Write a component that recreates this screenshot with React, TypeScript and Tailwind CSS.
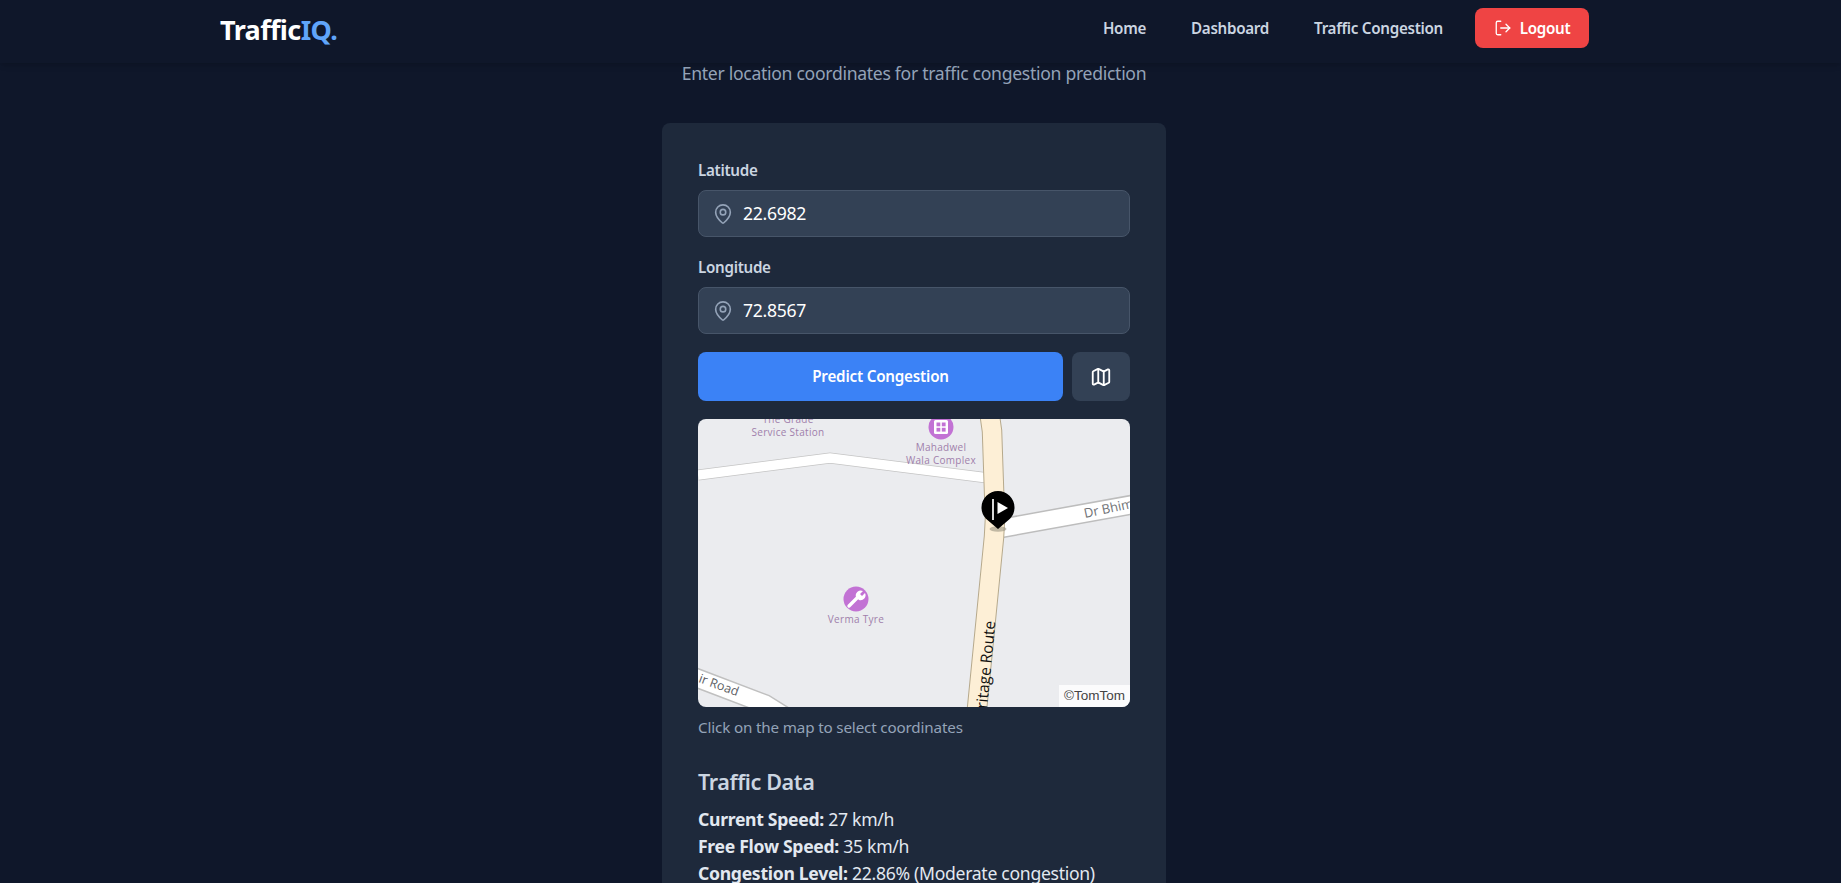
import { LogOut, MapPin, Map as MapIcon } from 'lucide-react';

const font = { fontFamily: '"Noto Sans", sans-serif' };
const mapFont = { fontFamily: '"Open Sans", sans-serif' };

function CoordinateField({ label, value }: { label: string; value: string }) {
  return (
    <div className="mb-[18px]">
      <label className="block h-[24px] mb-[8px] text-[15.2px] leading-[24px] font-semibold text-[#cbd5e1] tracking-[-0.3px]">{label}</label>
      <div className="flex items-center h-[47px] rounded-lg border border-[#475569] bg-[#334155] pl-[13px]">
        <MapPin size={22} strokeWidth={1.75} className="text-[#94a3b8] shrink-0" />
        <span className="ml-[9px] text-[17.6px] text-white tracking-[-0.3px]">{value}</span>
      </div>
    </div>
  );
}

// static drawing of the map tile
function MapTile() {
  const road = 'M292 -2 L294 12 L297 100 L296 118 L279 290';
  return (
    <svg viewBox="0 0 432 288" className="block w-full h-full">
      <rect width="432" height="288" fill="#ebecef" />
      <path d="M0 56 L132 39 L290 59" fill="none" stroke="#c4c4c4" strokeWidth="11" />
      <path d="M0 56 L132 39 L290 59" fill="none" stroke="#ffffff" strokeWidth="9.5" />
      <path d="M296 110.6 L436 85.3" fill="none" stroke="#bdbdbd" strokeWidth="20" />
      <path d="M296 110.6 L436 85.3" fill="none" stroke="#ffffff" strokeWidth="17" />
      <path d="M-4 258 L67 285 L112 313" fill="none" stroke="#c0c0c0" strokeWidth="20" />
      <path d="M-4 258 L67 285 L112 313" fill="none" stroke="#ffffff" strokeWidth="17" />
      <path d={road} fill="none" stroke="#b6a98c" strokeWidth="20.5" />
      <path d={road} fill="none" stroke="#fdefd6" strokeWidth="18.5" />

      <g fontSize="10" fill="#a07fab" textAnchor="middle" letterSpacing="0.3" style={mapFont}>
        <text x="90" y="4">The Grade</text>
        <text x="90" y="17">Service Station</text>
        <text x="243" y="32">Mahadwel</text>
        <text x="243" y="45">Wala Complex</text>
        <text x="158" y="204">Verma Tyre</text>
      </g>

      <circle cx="243" cy="8" r="12.5" fill="#c272d4" />
      <rect x="236" y="1" width="14" height="14" rx="1.5" fill="#ffffff" />
      <rect x="238.5" y="3.5" width="3.8" height="3.8" fill="#c272d4" />
      <rect x="243.8" y="3.5" width="3.8" height="3.8" fill="#c272d4" />
      <rect x="238.5" y="8.8" width="3.8" height="3.8" fill="#c272d4" />
      <rect x="243.8" y="8.8" width="3.8" height="3.8" fill="#c272d4" />

      <circle cx="158" cy="180" r="12.5" fill="#c272d4" />
      <path d="M151 187 L160 178" stroke="#ffffff" strokeWidth="3.4" strokeLinecap="round" />
      <path d="M158 178 a5 5 0 0 1 7 -6 l-3 3 l2 2 l3 -3 a5 5 0 0 1 -6 7 z" fill="#ffffff" />

      <text transform="translate(387 99) rotate(-12)" fontSize="13" fill="#6f7276" style={mapFont}>Dr Bhim</text>
      <text transform="translate(0 263) rotate(20)" fontSize="12.5" fill="#5d6064" style={mapFont}>ir Road</text>
      <text transform="translate(289 290) rotate(-84.5)" fontSize="15.5" fill="#111111" style={mapFont}>ritage Route</text>

      <ellipse cx="300" cy="110" rx="8.5" ry="2.8" fill="#8f8a7a" opacity="0.55" />
      <path d="M300 110 L288 99.8 A16.5 16.5 0 1 1 312 99.8 Z" fill="#000000" />
      <rect x="294" y="80" width="2" height="21" fill="#d8d8d8" />
      <path d="M299.5 83 L310 89 L299.5 95 Z" fill="#ffffff" />
    </svg>
  );
}

function DataLine({ label, value }: { label: string; value: string }) {
  return (
    <p className="h-[26.8px] text-[17.6px] leading-[26.8px] text-[#e2e8f0] tracking-[-0.3px] whitespace-nowrap">
      <strong className="font-bold">{label}</strong> {value}
    </p>
  );
}

export default function App() {
  return (
    <div className="h-screen overflow-hidden bg-[#0f172a]" style={font}>
      <header className="relative z-10 flex items-start justify-between h-[63px] pl-[220px] pr-[252px] bg-[#0f172a] shadow-md">
        <div className="mt-[11px] text-[27px] leading-[38px] font-bold text-white tracking-[-0.6px]">
          Traffic<span className="text-[#60a5fa]">IQ.</span>
        </div>
        <nav className="flex items-center mt-[8px] text-[15.2px] font-semibold text-[#cbd5e1] tracking-[-0.3px]">
          <a className="mr-[45px]">Home</a>
          <a className="mr-[45px]">Dashboard</a>
          <a className="mr-[32px]">Traffic Congestion</a>
          <button className="flex items-center gap-[8px] h-[40px] w-[114px] justify-center rounded-lg bg-[#ef4444] text-white">
            <LogOut size={18} strokeWidth={1.75} />
            Logout
          </button>
        </nav>
      </header>
      <main className="flex flex-col items-center pr-[13px]">
        <p className="text-[17.6px] leading-[20px] text-[#94a3b8] tracking-[-0.3px]">
          Enter location coordinates for traffic congestion prediction
        </p>
        <section className="w-[504px] mt-[40px] rounded-lg bg-[#1e293b] px-[36px] pt-[35px] pb-[36px]">
          <CoordinateField label="Latitude" value="22.6982" />
          <CoordinateField label="Longitude" value="72.8567" />
          <div className="flex gap-[9px] h-[49px]">
            <button className="flex-1 rounded-lg bg-[#3b82f6] text-[15.2px] font-semibold text-white tracking-[-0.2px]">Predict Congestion</button>
            <button className="flex items-center justify-center w-[58px] rounded-lg bg-[#334155] text-white">
              <MapIcon size={22} strokeWidth={2} />
            </button>
          </div>
          <div className="relative h-[288px] mt-[18px] rounded-lg overflow-hidden">
            <MapTile />
            <span className="absolute right-0 bottom-0 h-[22px] px-[5px] bg-white/80 text-[13.5px] leading-[22px] text-[#444]" style={{ fontFamily: '"Liberation Sans", sans-serif' }}>©TomTom</span>
          </div>
          <p className="mt-[9px] text-[15.2px] leading-[22px] text-[#94a3b8] tracking-[-0.15px]">Click on the map to select coordinates</p>
          <h3 className="mt-[29px] text-[21.6px] leading-[30px] font-semibold text-[#cbd5e1] tracking-[-0.4px]">Traffic Data</h3>
          <div className="mt-[9px]">
            <DataLine label="Current Speed:" value="27 km/h" />
            <DataLine label="Free Flow Speed:" value="35 km/h" />
            <DataLine label="Congestion Level:" value="22.86% (Moderate congestion)" />
          </div>
        </section>
      </main>
    </div>
  );
}
